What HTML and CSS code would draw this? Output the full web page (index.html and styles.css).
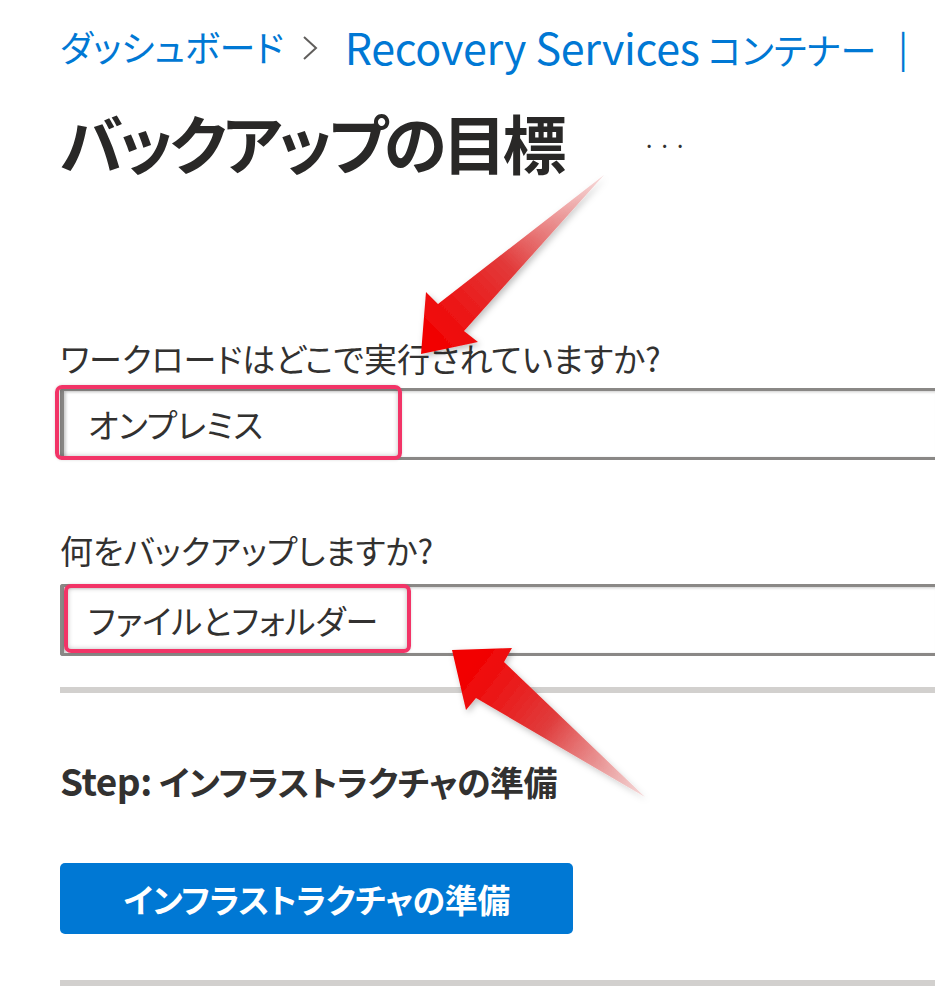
FILE: index.html
```html
<!DOCTYPE html>
<html lang="ja">
<head>
<meta charset="utf-8">
<link rel="stylesheet" href="styles.css">
</head>
<body>
<div class="page">
  <nav class="breadcrumb">
    <a class="crumb">ダッシュボード</a>
    <svg class="chev" width="16" height="26" viewBox="0 0 16 26" xmlns="http://www.w3.org/2000/svg"><polyline points="2,2 14,13 2,24" fill="none" stroke="#605e5c" stroke-width="2"/></svg>
    <a class="crumb"><span class="latin">Recovery Services</span> コンテナー</a>
    <span class="pipe">|</span>
  </nav>
  <header class="title-row">
    <h1 class="title">バックアップの目標</h1>
    <span class="more">&middot;&middot;&middot;</span>
  </header>

  <section class="field field-first">
    <label class="label">ワークロードはどこで実行されていますか?</label>
    <div class="select">
      <span class="select-text">オンプレミス</span>
      <span class="mark mark-1"></span>
    </div>
  </section>

  <section class="field field-second">
    <label class="label">何をバックアップしますか?</label>
    <div class="select">
      <span class="select-text">ファイルとフォルダー</span>
      <span class="mark mark-2"></span>
    </div>
  </section>

  <hr class="sep sep-1">

  <h2 class="step"><span class="latin-step">Step:</span> インフラストラクチャの準備</h2>

  <button class="primary">インフラストラクチャの準備</button>

  <hr class="sep sep-2">
</div>

<svg class="arrows" width="935" height="986" viewBox="0 0 935 986" xmlns="http://www.w3.org/2000/svg">
  <defs>
    <linearGradient id="g1" gradientUnits="userSpaceOnUse" x1="430" y1="340" x2="604" y2="175">
      <stop offset="0" stop-color="#f20000"/>
      <stop offset="0.45" stop-color="#e23a3a"/>
      <stop offset="1" stop-color="#f2c2c2" stop-opacity="0.6"/>
    </linearGradient>
    <linearGradient id="g2" gradientUnits="userSpaceOnUse" x1="470" y1="665" x2="645" y2="797">
      <stop offset="0" stop-color="#f20000"/>
      <stop offset="0.45" stop-color="#e03c3c"/>
      <stop offset="1" stop-color="#f2c2c2" stop-opacity="0.6"/>
    </linearGradient>
    <filter id="sh" x="-20%" y="-20%" width="140%" height="140%">
      <feDropShadow dx="2" dy="3" stdDeviation="3" flood-color="#000" flood-opacity="0.25"/>
    </filter>
  </defs>
  <polygon filter="url(#sh)" fill="url(#g1)" points="421,354 426,292 438,304 604,175 464,331 478,342"/>
  <polygon filter="url(#sh)" fill="url(#g2)" points="452,650 512,648 504,662 645,797 476,698 466,710"/>
</svg>
</body>
</html>
```

FILE: styles.css
```css
html, body {
  margin: 0;
  padding: 0;
  background: #ffffff;
  overflow: hidden;
}

*, *::before, *::after {
  box-sizing: border-box;
}

body {
  width: 935px;
  height: 986px;
  position: relative;
  font-family: "Noto Sans CJK JP", "Noto Sans", sans-serif;
  font-feature-settings: "palt";
  color: #323130;
}

.page {
  padding: 18px 0 0 60px;
  white-space: nowrap;
}

.breadcrumb {
  display: flex;
  align-items: center;
  height: 56px;
  font-size: 36px;
  color: #0078d4;
}

.crumb {
  color: #0078d4;
}

.latin {
  font-size: 43px;
  letter-spacing: -0.3px;
}

.chev {
  margin: 4px 27px 0 18px;
}

.pipe {
  margin-left: 22px;
  color: #0078d4;
}

.title-row {
  display: flex;
  align-items: center;
  gap: 80px;
  margin-top: 22px;
  height: 90px;
}

.title {
  margin: 0;
  font-size: 64px;
  font-weight: 700;
  letter-spacing: -4px;
  color: #292827;
}

.more {
  font-size: 24px;
  letter-spacing: 2px;
  color: #323130;
  margin-top: 6px;
}

.field {
  display: flex;
  flex-direction: column;
  gap: 8px;
}

.field-first {
  margin-top: 150px;
}

.field-second {
  margin-top: 68px;
}

.field-second .select {
  margin-top: 4px;
}

.label {
  font-size: 33px;
  line-height: 44px;
  color: #323130;
}

.select {
  position: relative;
  height: 72px;
  width: 875px;
  border: 3px solid #8a8886;
  border-left-width: 4px;
  border-right: none;
  border-radius: 3px 0 0 3px;
  display: flex;
  align-items: center;
  padding-left: 24px;
  box-shadow: inset 2px 1px 3px rgba(0, 0, 0, 0.2);
}

.select-text {
  font-size: 33px;
  color: #323130;
}

.mark {
  position: absolute;
  border: 4px solid #f23467;
  border-radius: 7px;
  box-shadow: inset 0 0 5px rgba(0, 0, 0, 0.25), 0 0 3px rgba(0, 0, 0, 0.15);
}

.mark-1 {
  left: -9px;
  top: -6px;
  width: 347px;
  height: 75px;
}

.mark-2 {
  left: 0px;
  top: -3px;
  width: 347px;
  height: 69px;
}

.sep {
  border: none;
  height: 6px;
  background: #d2d0ce;
  margin: 0;
  width: 875px;
}

.sep-1 {
  margin-top: 31px;
}

.step {
  margin: 62px 0 0 0;
  font-size: 34px;
  font-weight: 700;
  color: #323130;
  line-height: 50px;
  letter-spacing: -0.5px;
}

.latin-step {
  font-size: 37px;
}

.primary {
  display: flex;
  align-items: center;
  justify-content: center;
  margin-top: 56px;
  width: 513px;
  height: 71px;
  border: none;
  border-radius: 5px;
  background: #0078d4;
  color: #ffffff;
  font-family: inherit;
  font-feature-settings: "palt";
  font-size: 33px;
  font-weight: 700;
  letter-spacing: -0.5px;
  padding: 0;
}

.sep-2 {
  margin-top: 46px;
}

.arrows {
  position: absolute;
  left: 0;
  top: 0;
  pointer-events: none;
}
```
